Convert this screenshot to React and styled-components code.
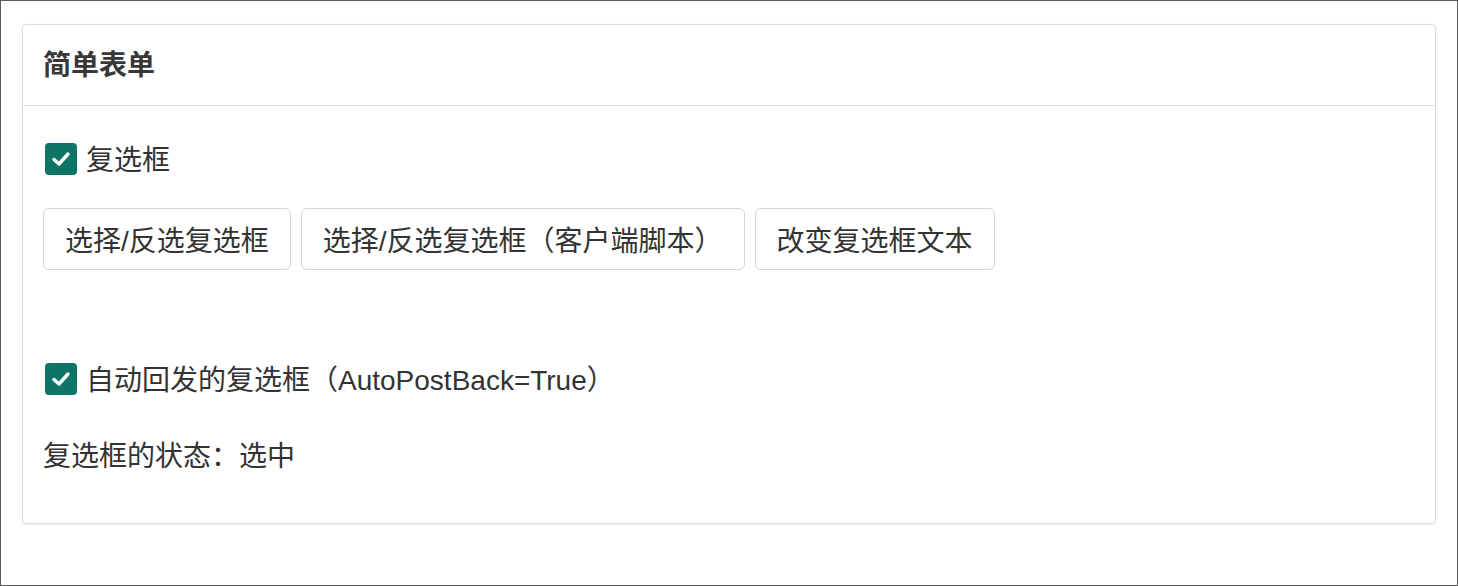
import React from "react";
import styled, { createGlobalStyle } from "styled-components";

const Global = createGlobalStyle`
  html, body { margin: 0; padding: 0; background: #fff; }
  body { font-family: "Liberation Sans", "Noto Sans CJK SC", sans-serif; color: #333; }
  * { box-sizing: border-box; }
`;

const Frame = styled.div`
  width: 1458px;
  height: 586px;
  border: 1px solid #5a5a5a;
  padding: 23px 21px 0 21px;
`;

const Panel = styled.section`
  border: 1px solid #dcdcdc;
  border-radius: 4px;
  box-shadow: 0 1px 3px rgba(0, 0, 0, 0.08);
  background: #fff;
`;

const Header = styled.header`
  height: 81px;
  border-bottom: 1px solid #dcdcdc;
  display: flex;
  align-items: center;
  padding: 0 20px;
`;

const Title = styled.h2`
  margin: 0;
  font-size: 28px;
  font-weight: 700;
  color: #383838;
  line-height: 1;
  padding-top: 2px;
`;

const Body = styled.div`
  padding: 37px 20px 48px 20px;
  display: flex;
  flex-direction: column;
  align-items: flex-start;
`;

const CheckRow = styled.label`
  display: flex;
  align-items: flex-start;
  height: 32px;
  gap: 9px;
  font-size: 28px;
  line-height: 32px;
  color: #333;
  margin-top: ${(p) => p.$mt || 0}px;
  padding-left: 2px;
`;

const LabelText = styled.span`
  padding-top: 2px;
`;

const Box = styled.span`
  width: 32px;
  height: 32px;
  border-radius: 4px;
  background: #0e7566;
  display: inline-flex;
  align-items: center;
  justify-content: center;
  flex: none;
`;

const ButtonRow = styled.div`
  display: flex;
  gap: 10px;
  margin-top: 33px;
`;

const Button = styled.button`
  height: 62px;
  padding: 0 21px;
  border: 1px solid #d6d6d6;
  border-radius: 6px;
  background: #fff;
  font-family: inherit;
  font-size: 28px;
  color: #333;
  cursor: pointer;
`;

const Status = styled.div`
  margin-top: 44px;
  font-size: 28px;
  line-height: 36px;
  color: #333;
`;

const Check = () => (
  <Box>
    <svg width="22" height="22" viewBox="0 0 22 22">
      <path d="M4 11.5 L9 16 L18 6" fill="none" stroke="#fff" strokeWidth="3.4" strokeLinecap="round" strokeLinejoin="round" />
    </svg>
  </Box>
);

export default function App() {
  return (
    <>
      <Global />
      <Frame>
        <Panel>
          <Header>
            <Title>简单表单</Title>
          </Header>
          <Body>
            <CheckRow>
              <Check />
              <LabelText>复选框</LabelText>
            </CheckRow>
            <ButtonRow>
              <Button>选择/反选复选框</Button>
              <Button>选择/反选复选框（客户端脚本）</Button>
              <Button>改变复选框文本</Button>
            </ButtonRow>
            <CheckRow $mt={93}>
              <Check />
              <LabelText>自动回发的复选框（AutoPostBack=True）</LabelText>
            </CheckRow>
            <Status>复选框的状态：选中</Status>
          </Body>
        </Panel>
      </Frame>
    </>
  );
}
